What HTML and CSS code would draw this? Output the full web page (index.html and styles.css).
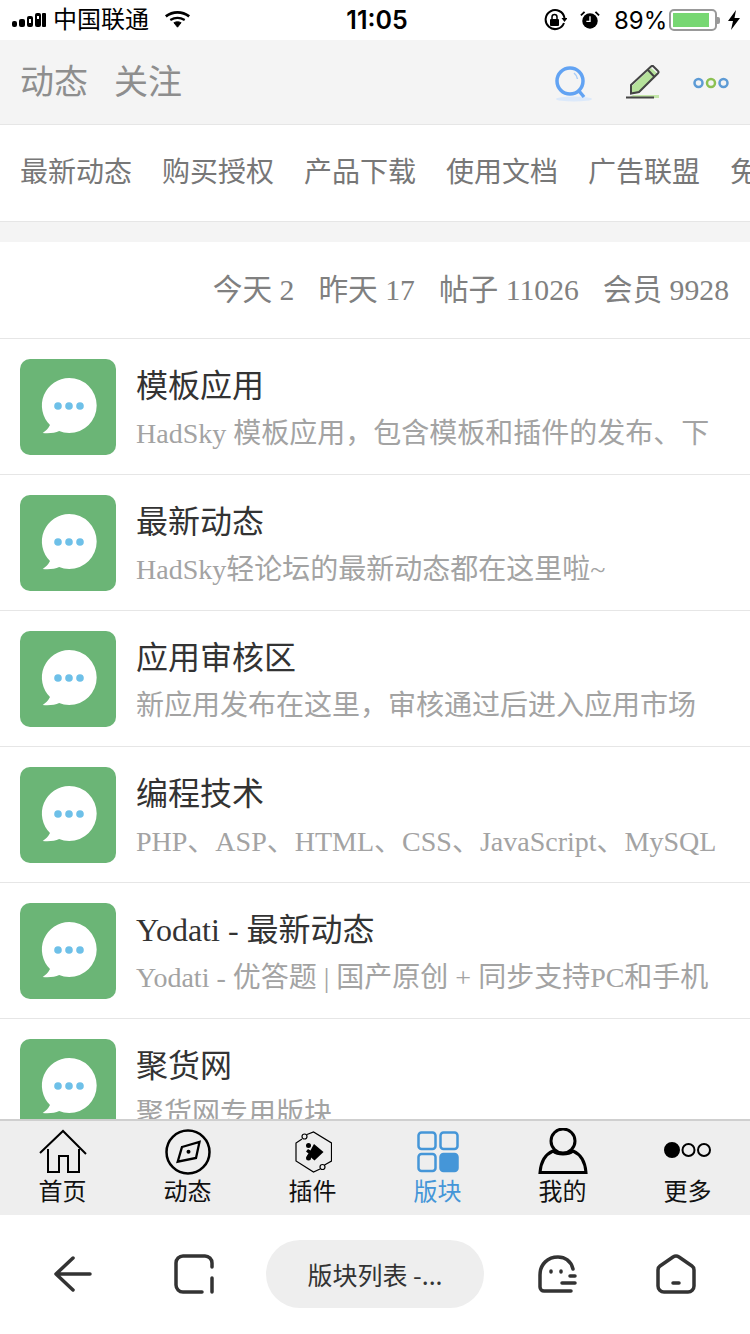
FILE: index.html
```html
<!DOCTYPE html>
<html lang="zh-CN">
<head>
    <meta charset="UTF-8">
    <meta name="viewport" content="width=device-width, initial-scale=1.0">
    <title>版块列表</title>
    <link rel="stylesheet" href="styles.css">
</head>
<body>
<svg class="defs" width="0" height="0">
    <symbol id="forum-icon" viewBox="0 0 96 96">
        <rect width="96" height="96" rx="10" fill="#6bb576"/>
        <path d="M49.2 19a27.500 27.500 0 0 1 0 55c-4 0-7-.7-10-2-4 2-10 2.500-16.500 2 3-2 6-5 7.300-8a27.500 27.500 0 0 1 19.200-47z" fill="#fff"/>
        <circle cx="38" cy="47" r="3.800" fill="#6ec0e8"/>
        <circle cx="49" cy="47" r="3.800" fill="#6ec0e8"/>
        <circle cx="60" cy="47" r="3.800" fill="#6ec0e8"/>
    </symbol>
</svg>

<div class="status-bar">
    <div class="status-left">
        <svg width="36" height="16" viewBox="0 0 36 16" fill="#000">
            <rect x="1" y="9" width="5" height="6" rx="2"/>
            <rect x="8" y="7" width="6" height="8" rx="2"/>
            <rect x="16" y="4" width="6" height="11" rx="2"/>
            <rect x="24" y="1" width="6" height="14" rx="2"/>
            <rect x="31" y="1" width="4" height="14" rx="1"/>
            <rect x="18" y="7" width="2" height="4" fill="#fff"/>
            <rect x="26" y="4" width="2" height="3" fill="#fff"/>
        </svg>
        <span class="carrier">中国联通</span>
        <svg class="wifi" width="27" height="18" viewBox="0 0 30 20" fill="none" stroke="#000">
            <path d="M2 6c8-6 18-6 26 0" stroke-width="3"/>
            <path d="M7 10c5-3 11-3 16 0" stroke-width="2.500"/>
            <path d="M11 13c3-1.500 5-1.500 8 0l-4 5z" fill="#000" stroke-width="1"/>
        </svg>
    </div>
    <div class="status-time">11:05</div>
    <div class="status-right">
        <svg width="24" height="24" viewBox="0 0 24 24">
            <path d="M21 15a9.500 9.500 0 1 1 .5-5" fill="none" stroke="#000" stroke-width="2"/>
            <path d="M18.500 10h6l-3 4z" fill="#000"/>
            <rect x="7" y="11" width="9" height="7" rx="1" fill="#000"/>
            <path d="M9 11V9a2.500 2.500 0 0 1 5 0v2" fill="none" stroke="#000" stroke-width="1.500"/>
        </svg>
        <svg class="alarm" width="20" height="20" viewBox="0 0 22 22">
            <circle cx="11" cy="12" r="8.500" fill="#000"/>
            <path d="M11 7v5.500H7" fill="none" stroke="#fff" stroke-width="1.500"/>
            <path d="M1 6l4-4M21 6l-4-4" stroke="#000" stroke-width="2"/>
        </svg>
        <span class="battery-pct">89%</span>
        <div class="battery"><div class="battery-fill"></div></div>
        <div class="battery-cap"></div>
        <svg class="bolt" width="12" height="20" viewBox="0 0 12 20">
            <path d="M8 0L0 11h5l-2 9 9-12H6.500z" fill="#000"/>
        </svg>
    </div>
</div>

<header class="top-bar">
    <a class="top-tab">动态</a>
    <a class="top-tab">关注</a>
    <div class="top-icons">
        <svg class="ic-search" width="38" height="36" viewBox="0 0 38 36">
            <ellipse cx="19" cy="33" rx="18" ry="2.500" fill="#dce9fa"/>
            <circle cx="15" cy="15" r="13" fill="none" stroke="#62a3f3" stroke-width="3.500"/>
            <path d="M24 25l5 6" stroke="#62a3f3" stroke-width="3.500"/>
            <path d="M19 7c2 1.500 3 3 3.500 6" fill="none" stroke="#a9cdf8" stroke-width="1.500"/>
        </svg>
        <svg class="ic-edit" width="34" height="36" viewBox="0 0 34 36">
            <path d="M7 30h26v3H2z" fill="#c3e6a8"/>
            <path d="M6 21L25 3l7 6-19 19-8 1z" fill="#b6e29b"/>
            <path d="M5 20L25 1.500c1-.8 1.800-.8 2.500 0l4.500 4.500c.8.700.8 1.500 0 2.300L13 27l-8 1.500zM22 5l6.500 7" fill="none" stroke="#444" stroke-width="2"/>
            <path d="M0 32.500h28" stroke="#444" stroke-width="2"/>
        </svg>
        <svg class="ic-more" width="36" height="12" viewBox="0 0 36 12" fill="none" stroke-width="2.500">
            <circle cx="5.500" cy="6" r="4" stroke="#5d9bd5"/>
            <circle cx="18" cy="6" r="4" stroke="#8cc152"/>
            <circle cx="30.500" cy="6" r="4" stroke="#5d9bd5"/>
        </svg>
    </div>
</header>

<nav class="menu">
    <a>最新动态</a>
    <a>购买授权</a>
    <a>产品下载</a>
    <a>使用文档</a>
    <a>广告联盟</a>
    <a>免费模板</a>
</nav>

<main class="content">
    <section class="stats">
        <span>今天 2</span>
        <span>昨天 17</span>
        <span>帖子 11026</span>
        <span>会员 9928</span>
    </section>
    <section class="forums">
        <article class="forum">
            <svg class="forum-icon"><use href="#forum-icon"/></svg>
            <div class="forum-text">
                <h3>模板应用</h3>
                <p>HadSky 模板应用，包含模板和插件的发布、下</p>
            </div>
        </article>
        <article class="forum">
            <svg class="forum-icon"><use href="#forum-icon"/></svg>
            <div class="forum-text">
                <h3>最新动态</h3>
                <p>HadSky轻论坛的最新动态都在这里啦~</p>
            </div>
        </article>
        <article class="forum">
            <svg class="forum-icon"><use href="#forum-icon"/></svg>
            <div class="forum-text">
                <h3>应用审核区</h3>
                <p>新应用发布在这里，审核通过后进入应用市场</p>
            </div>
        </article>
        <article class="forum">
            <svg class="forum-icon"><use href="#forum-icon"/></svg>
            <div class="forum-text">
                <h3>编程技术</h3>
                <p>PHP、ASP、HTML、CSS、JavaScript、MySQL</p>
            </div>
        </article>
        <article class="forum">
            <svg class="forum-icon"><use href="#forum-icon"/></svg>
            <div class="forum-text">
                <h3>Yodati - 最新动态</h3>
                <p>Yodati - 优答题 | 国产原创 + 同步支持PC和手机</p>
            </div>
        </article>
        <article class="forum">
            <svg class="forum-icon"><use href="#forum-icon"/></svg>
            <div class="forum-text">
                <h3>聚货网</h3>
                <p>聚货网专用版块</p>
            </div>
        </article>
    </section>
</main>

<footer class="tab-bar">
    <a class="tab">
        <div class="tab-icon">
            <svg width="50" height="46" viewBox="0 0 50 46" fill="none" stroke="#000" stroke-width="2">
                <path d="M2 24L25 2l23 23"/>
                <path d="M10 20v23h11V27h9v16h11V20"/>
            </svg>
        </div>
        <span>首页</span>
    </a>
    <a class="tab">
        <div class="tab-icon">
            <svg width="46" height="46" viewBox="0 0 46 46" fill="none" stroke="#000">
                <circle cx="23" cy="23" r="21.500" stroke-width="2.500"/>
                <path d="M17 18l17.500-5-3.500 16-18.300 3.700z" stroke-width="2.300"/>
                <circle cx="23.500" cy="22.700" r="2" fill="#000" stroke="none"/>
            </svg>
        </div>
        <span>动态</span>
    </a>
    <a class="tab">
        <div class="tab-icon">
            <svg width="38" height="42" viewBox="0 0 38 42" fill="none" stroke="#000" stroke-width="1.200">
                <path d="M13 3.500L19.500 1l18 11v18l-7 4M26 38l-6.500 3L2 30V12l6-4"/>
                <circle cx="10.500" cy="5.500" r="2.500"/>
                <circle cx="28.500" cy="36" r="2.500"/>
                <path d="M20 13l9.500 8-9 8.500-3.500-3-3 1.500-1-3.500 1.500-2-2.500-2 2-2.500 2.500 1.500 1.500-3z" fill="#000" stroke="none"/>
                <circle cx="14.500" cy="14.500" r="2.500" fill="#000" stroke="none"/>
                <circle cx="14.500" cy="27" r="2.500" fill="#000" stroke="none"/>
            </svg>
        </div>
        <span>插件</span>
    </a>
    <a class="tab active">
        <div class="tab-icon">
            <svg width="42" height="42" viewBox="0 0 42 42" fill="none" stroke="#4596d8" stroke-width="2.500">
                <rect x="1.500" y="1.500" width="17" height="16.500" rx="3"/>
                <rect x="23.500" y="1.500" width="17" height="16.500" rx="3"/>
                <rect x="1.500" y="23" width="17" height="17" rx="3"/>
                <rect x="23.500" y="23" width="17" height="17" rx="3" fill="#4596d8"/>
            </svg>
        </div>
        <span>版块</span>
    </a>
    <a class="tab">
        <div class="tab-icon">
            <svg width="50" height="48" viewBox="0 1 50 48" fill="none" stroke="#000" stroke-width="3">
                <circle cx="25" cy="14" r="12"/>
                <path d="M15 24C8 27 3 33 2 45.500h46C47 33 42 27 35 24c-5 4-15 4-20 0z"/>
            </svg>
        </div>
        <span>我的</span>
    </a>
    <a class="tab">
        <div class="tab-icon">
            <svg width="48" height="22" viewBox="0 0 48 22" fill="none" stroke="#000" stroke-width="2">
                <circle cx="8" cy="9" r="7" fill="#000"/>
                <circle cx="24.500" cy="9" r="6"/>
                <circle cx="40" cy="9" r="6"/>
            </svg>
        </div>
        <span>更多</span>
    </a>
</footer>

<div class="browser-bar">
    <svg width="38" height="36" viewBox="0 0 38 36" fill="none" stroke="#333" stroke-width="3.500" stroke-linecap="round" stroke-linejoin="round">
        <path d="M19 2L2 18l17 16M2 18h34"/>
    </svg>
    <svg class="btn-tabs" width="40" height="40" viewBox="0 0 40 40" fill="none" stroke="#333" stroke-width="3.500" stroke-linecap="round" stroke-linejoin="round">
        <path d="M28 38H9a7 7 0 0 1-7-7V9a7 7 0 0 1 7-7h22a7 7 0 0 1 7 7v4M38 24v14"/>
    </svg>
    <div class="url-pill">版块列表 -...</div>
    <svg class="btn-face" width="40" height="38" viewBox="0 0 40 38" fill="none" stroke="#333" stroke-width="3.500" stroke-linecap="round" stroke-linejoin="round">
        <path d="M35 14C33 6 27 2 20 2 10 2 2 9 2 20v12c0 2.500 2 4 4 4h27M24 28h13M32 21h5M13 16v1M23 16v1"/>
    </svg>
    <svg class="btn-home" width="40" height="40" viewBox="0 0 40 40" fill="none" stroke="#333" stroke-width="3.500" stroke-linecap="round" stroke-linejoin="round">
        <path d="M17 3L4 12c-1.500 1-2 2.500-2 4v16a6 6 0 0 0 6 6h24a6 6 0 0 0 6-6V16c0-1.500-.5-3-2-4L23 3c-2-1.300-4-1.300-6 0zM17 29h6"/>
    </svg>
</div>
</body>
</html>
```

FILE: styles.css
```css
* {
    box-sizing: border-box;
}

body {
    margin: 0;
    width: 750px;
    height: 1334px;
    display: flex;
    flex-direction: column;
    overflow: hidden;
    background: #ffffff;
    font-family: "Liberation Serif", "Noto Sans CJK SC", serif;
}

.defs {
    position: absolute;
}

/* status bar */
.status-bar {
    height: 40px;
    flex: none;
    display: flex;
    align-items: center;
    padding: 0 9px 0 11px;
    background: #ffffff;
    font-family: Inter, "Noto Sans CJK SC", sans-serif;
    color: #000;
}

.status-left {
    width: 326px;
    flex: none;
    display: flex;
    align-items: center;
}

.carrier {
    font-size: 24px;
    margin-left: 6px;
    line-height: 40px;
}

.wifi {
    margin-left: 15px;
}

.status-time {
    width: 80px;
    flex: none;
    font-size: 25px;
    font-weight: 600;
    text-align: center;
}

.status-right {
    flex: 1;
    display: flex;
    align-items: center;
    padding-left: 126px;
}

.alarm {
    margin-left: 13px;
}

.battery-pct {
    font-size: 24px;
    margin-left: 14px;
}

.battery {
    width: 48px;
    height: 22px;
    margin-left: 2px;
    padding: 2px;
    border: 2px solid #999;
    border-radius: 5px;
}

.battery-fill {
    width: 36px;
    height: 14px;
    background: #77d772;
}

.battery-cap {
    width: 3px;
    height: 7px;
    background: #999;
    border-radius: 0 2px 2px 0;
}

.bolt {
    margin-left: 8px;
}

/* top bar */
.top-bar {
    height: 85px;
    flex: none;
    display: flex;
    align-items: center;
    padding: 0 20px 6px;
    background: #f4f4f4;
    border-bottom: 1px solid #e6e6e6;
}

.top-tab {
    font-size: 34px;
    color: #8e8e8e;
    margin-right: 26px;
}

.top-icons {
    margin-left: auto;
    display: flex;
    align-items: center;
}

.ic-search {
    margin-top: 10px;
}

.ic-edit {
    margin-left: 33px;
    margin-top: 8px;
}

.ic-more {
    margin-left: 33px;
    margin-right: 1px;
    margin-top: 8px;
}

/* horizontal menu */
.menu {
    height: 97px;
    flex: none;
    display: flex;
    gap: 30px;
    align-items: center;
    padding: 0 20px 6px;
    overflow: hidden;
    white-space: nowrap;
    background: #ffffff;
    border-bottom: 1px solid #e6e6e6;
    font-size: 28px;
    color: #777;
}

.menu a {
    flex: none;
}

/* page body */
.content {
    flex: 1;
    min-height: 0;
    overflow: hidden;
    padding-top: 20px;
    background: #f4f4f4;
}

.stats {
    height: 97px;
    display: flex;
    justify-content: flex-end;
    align-items: center;
    gap: 24px;
    padding: 0 21px 6px;
    background: #ffffff;
    border-bottom: 1px solid #e6e6e6;
    font-size: 29.7px;
    color: #808080;
}

.forum {
    height: 136px;
    display: flex;
    align-items: center;
    padding: 0 20px;
    background: #ffffff;
    border-bottom: 1px solid #e6e6e6;
}

.forum-icon {
    width: 96px;
    height: 96px;
    flex: none;
}

.forum-text {
    margin-left: 20px;
    padding-top: 5px;
    min-width: 0;
    flex: 1;
}

.forum-text h3 {
    margin: 0 0 1px;
    font-size: 32px;
    font-weight: normal;
    line-height: 48px;
    color: #333;
    white-space: nowrap;
}

.forum-text p {
    margin: 0;
    font-size: 28px;
    line-height: 46px;
    color: #a3a3a3;
    white-space: nowrap;
}

/* bottom tabs */
.tab-bar {
    height: 96px;
    flex: none;
    display: flex;
    background: #eeeeee;
    border-top: 2px solid #cfcfcf;
    font-family: "Liberation Sans", "Noto Sans CJK SC", sans-serif;
}

.tab {
    flex: 1;
    display: flex;
    flex-direction: column;
    align-items: center;
    padding-top: 3px;
    font-size: 24px;
    line-height: 24px;
    color: #111;
}

.tab-icon {
    height: 56px;
    display: flex;
    align-items: center;
}

.tab.active {
    color: #4596d8;
}

/* browser toolbar */
.browser-bar {
    height: 119px;
    flex: none;
    display: flex;
    align-items: center;
    padding: 0 54px 2px;
    background: #ffffff;
}

.btn-tabs {
    margin-left: 82px;
}

.url-pill {
    width: 218px;
    height: 68px;
    margin-left: 52px;
    border-radius: 34px;
    background: #eeeeee;
    text-align: center;
    font-family: "Noto Sans CJK SC", sans-serif;
    font-size: 25px;
    line-height: 68px;
    color: #333;
}

.btn-face {
    margin-left: 54px;
}

.btn-home {
    margin-left: 78px;
}
```
